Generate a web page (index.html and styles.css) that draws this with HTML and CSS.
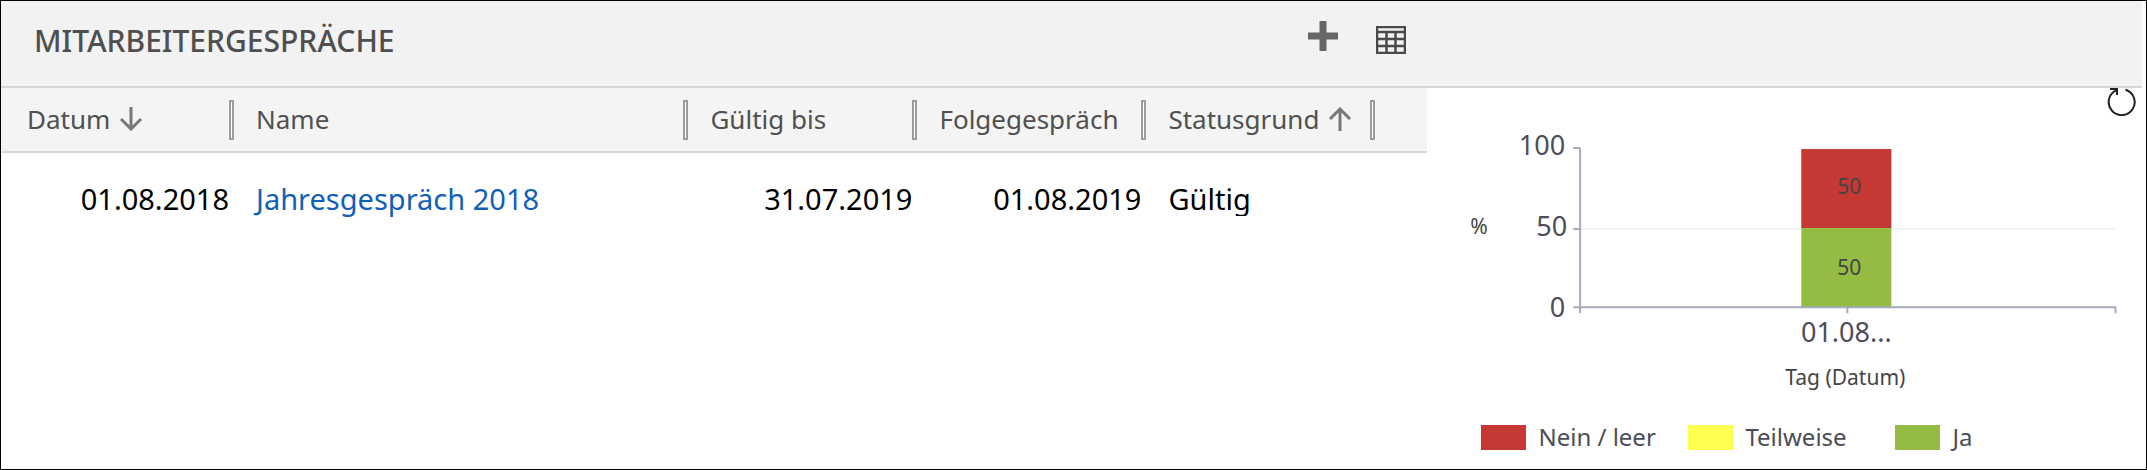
FILE: index.html
```
<!DOCTYPE html>
<html lang="de">
<head>
    <meta charset="UTF-8">
    <meta name="viewport" content="width=device-width, initial-scale=1.0">
    <title>Mitarbeitergespräche</title>
    <link rel="stylesheet" href="styles.css">
</head>
<body>
    <div class="panel">
        <div class="panel-header">
            <h1>MITARBEITERGESPRÄCHE</h1>
            <div class="actions">
                <button type="button" class="icon-button add" aria-label="Hinzufügen">
                    <svg width="30" height="30" viewBox="0 0 30 30"><path d="M11.5 0h7v11.5H30v7H18.500V30h-7V18.500H0v-7h11.500z" fill="#666"/></svg>
                </button>
                <button type="button" class="icon-button" aria-label="Raster anzeigen">
                    <svg width="30" height="28" viewBox="0 0 30 28"><path d="M1 1h28v26H1zM1 6h28M1 13h28M1 20h28M10.500 6v21M19.500 6v21" fill="none" stroke="#4a4a4a" stroke-width="2.500"/></svg>
                </button>
            </div>
        </div>

        <div class="panel-body">
            <div class="grid">
                <table>
                    <colgroup>
                        <col class="col-first">
                        <col>
                        <col class="col-date">
                        <col class="col-date">
                        <col class="col-date">
                        <col class="col-end">
                    </colgroup>
                    <thead>
                        <tr>
                            <th><div class="head">Datum
                                <svg width="22" height="24" viewBox="0 0 22 24"><path d="M11 0v22M1 12l10 10 10-10" fill="none" stroke="#777" stroke-width="3"/></svg>
                            </div></th>
                            <th><div class="head">Name</div></th>
                            <th><div class="head">Gültig bis</div></th>
                            <th><div class="head">Folgegespräch</div></th>
                            <th><div class="head">Statusgrund
                                <svg width="22" height="24" viewBox="0 0 22 24"><path d="M11 24V2M1 12L11 2l10 10" fill="none" stroke="#777" stroke-width="3"/></svg>
                            </div></th>
                            <td></td>
                        </tr>
                    </thead>
                    <tbody>
                        <tr>
                            <td class="date">01.08.2018</td>
                            <td><a href="#">Jahresgespräch 2018</a></td>
                            <td class="date">31.07.2019</td>
                            <td class="date">01.08.2019</td>
                            <td><div class="status">Gültig</div></td>
                            <td></td>
                        </tr>
                    </tbody>
                </table>
            </div>

            <div class="chart">
                <button type="button" class="icon-button refresh" aria-label="Aktualisieren">
                    <svg width="30" height="28" viewBox="0 0 30 28"><path d="M18.500 1.700A13 13 0 1 1 9.500 2.200M3 1h7v6" fill="none" stroke="#222" stroke-width="2"/></svg>
                </button>
                <svg class="plot" viewBox="0 0 718 326" role="img" aria-label="Tag (Datum) in %">
                    <path class="gridline" d="M152 141h536"/>
                    <rect x="374" y="61" width="90" height="79" fill="#c63833"/>
                    <rect x="374" y="140" width="90" height="79" fill="#94bc42"/>
                    <path class="axis" d="M153 60v165M146 60h7M146 141h7M146 219h542v6M420 219v6"/>
                    <g class="ticks">
                        <text x="138" y="67" text-anchor="end">100</text>
                        <text x="140" y="148" text-anchor="end">50</text>
                        <text x="138" y="229" text-anchor="end">0</text>
                        <text x="419" y="254" text-anchor="middle">01.08...</text>
                    </g>
                    <g class="labels">
                        <text x="52" y="146" text-anchor="middle">%</text>
                        <text x="422" y="106" text-anchor="middle">50</text>
                        <text x="422" y="187" text-anchor="middle">50</text>
                        <text x="418" y="297" text-anchor="middle">Tag (Datum)</text>
                    </g>
                </svg>
                <ul class="legend">
                    <li><span class="swatch red"></span>Nein / leer</li>
                    <li><span class="swatch yellow"></span>Teilweise</li>
                    <li><span class="swatch green"></span>Ja</li>
                </ul>
            </div>
        </div>
    </div>
</body>
</html>
```
FILE: styles.css
```
*, *::after {
    box-sizing: border-box;
}
body {
    margin: 0;
    font-family: "Noto Sans", "Open Sans", sans-serif;
    background: #fff;
    color: #000;
}
.panel {
    min-height: 100vh;
    border: 1px solid #000;
}
.panel-header {
    display: flex;
    justify-content: space-between;
    height: 87px;
    margin-right: 4px;
    padding-left: 33px;
    background: #f2f2f2;
    border-bottom: 2px solid #d6d6d6;
}
h1 {
    margin: 0;
    padding-top: 18px;
    font-size: 30px;
    line-height: 44px;
    font-weight: 500;
    color: #4f4f4f;
}
.actions {
    display: flex;
    align-items: flex-start;
    gap: 38px;
    width: 834px;
    padding-top: 20px;
}
.icon-button {
    display: block;
    padding: 0;
    border: none;
    background: none;
    cursor: pointer;
}
.icon-button svg {
    display: block;
}
.actions .icon-button + .icon-button {
    padding-top: 5px;
}
.panel-body {
    display: grid;
    grid-template-columns: 66.5% 33.5%;
}
table {
    width: 100%;
    table-layout: fixed;
    border-collapse: collapse;
}
.col-first {
    width: 233px;
}
.col-date {
    width: 229px;
}
.col-end {
    width: 52px;
}
thead tr {
    height: 64px;
    background: #f4f4f4;
    border-bottom: 2px solid #d6d6d6;
}
th {
    padding: 0;
    font-size: 26px;
    font-weight: 400;
    color: #505050;
}
.head {
    display: flex;
    align-items: center;
    gap: 10px;
    height: 40px;
    padding: 0 0 2px 22px;
    position: relative;
}
th:first-child .head {
    padding-left: 26px;
}
.head::after {
    content: "";
    position: absolute;
    top: 0;
    right: 0;
    width: 5px;
    height: 40px;
    background: #fff;
    border: 2px solid #9c9c9c;
}
tbody td {
    padding: 26px 5px 0 22px;
    font-size: 29px;
    line-height: 40px;
    vertical-align: top;
}
.date {
    text-align: right;
}
td a {
    color: #1160b7;
    text-decoration: none;
}
.status {
    height: 37px;
    overflow: hidden;
}
.chart {
    position: relative;
}
.refresh {
    position: absolute;
    top: 0;
    right: 9px;
}
.plot {
    display: block;
    width: 100%;
}
.gridline {
    stroke: #f0f4f7;
    stroke-width: 2;
}
.axis {
    fill: none;
    stroke: #a5abb8;
    stroke-width: 2;
}
.ticks {
    font-size: 27px;
    fill: #4d4d57;
}
.labels {
    font-size: 21px;
    fill: #444;
}
.legend {
    display: flex;
    margin: 0;
    padding: 7px 0 0 54px;
    list-style: none;
    font-size: 24px;
    line-height: 32px;
    color: #4d4d57;
}
.legend li {
    display: flex;
    align-items: center;
    gap: 12px;
    width: 207px;
}
.swatch {
    width: 45px;
    height: 25px;
}
.red {
    background: #c63833;
}
.yellow {
    background: #ffff4f;
}
.green {
    background: #94bc42;
}
```
